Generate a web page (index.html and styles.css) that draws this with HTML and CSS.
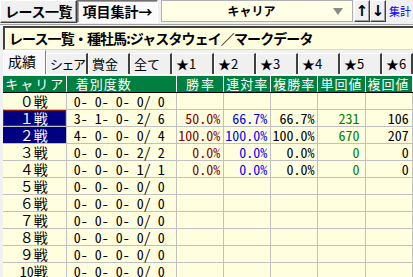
FILE: index.html
```html
<!DOCTYPE html>
<html>
<head>
<meta charset="utf-8">
<title>項目集計</title>
<link rel="stylesheet" href="styles.css">
</head>
<body>
<div class="toolbar">
  <button class="btn">レース一覧</button>
  <button class="btn pressed">項目集計→</button>
  <div class="select">
    <span class="select-text">キャリア</span>
    <span class="select-arrow"></span>
  </div>
  <button class="arrow">↑</button>
  <button class="arrow">↓</button>
  <a class="link" href="#">集計</a>
</div>

<div class="title">レース一覧・種牡馬:ジャスタウェイ／マークデータ</div>

<div class="tabs">
  <div class="tab active">成績</div>
  <div class="tab">シェア</div>
  <div class="tab">賞金</div>
  <div class="tab">全て</div>
  <div class="tab">★1</div>
  <div class="tab">★2</div>
  <div class="tab">★3</div>
  <div class="tab">★4</div>
  <div class="tab">★5</div>
  <div class="tab last">★6</div>
</div>

<div class="grid-wrap">
<table class="grid">
  <colgroup>
    <col class="c-name"><col class="c-count"><col class="c-rate"><col class="c-rate"><col class="c-rate"><col class="c-rate"><col class="c-rate"><col class="c-rest">
  </colgroup>
  <thead>
    <tr>
      <th class="h-center">キャリア</th>
      <th class="h-left">着別度数</th>
      <th class="h-center">勝率</th>
      <th>連対率</th>
      <th>複勝率</th>
      <th>単回値</th>
      <th>複回値</th>
      <th></th>
    </tr>
  </thead>
  <tbody>
    <tr><td class="name">０戦</td><td class="count"> 0- 0- 0- 0/ 0</td><td></td><td></td><td></td><td></td><td></td><td></td></tr>
    <tr><td class="name sel focus">１戦</td><td class="count"> 3- 1- 0- 2/ 6</td><td class="win">50.0%</td><td class="ren">66.7%</td><td class="fuku">66.7%</td><td class="tan">231</td><td class="fkv">106</td><td></td></tr>
    <tr><td class="name sel">２戦</td><td class="count"> 4- 0- 0- 0/ 4</td><td class="win">100.0%</td><td class="ren">100.0%</td><td class="fuku">100.0%</td><td class="tan">670</td><td class="fkv">207</td><td></td></tr>
    <tr><td class="name">３戦</td><td class="count"> 0- 0- 0- 2/ 2</td><td class="win">0.0%</td><td class="ren">0.0%</td><td class="fuku">0.0%</td><td class="tan">0</td><td class="fkv">0</td><td></td></tr>
    <tr><td class="name">４戦</td><td class="count"> 0- 0- 0- 1/ 1</td><td class="win">0.0%</td><td class="ren">0.0%</td><td class="fuku">0.0%</td><td class="tan">0</td><td class="fkv">0</td><td></td></tr>
    <tr><td class="name">５戦</td><td class="count"> 0- 0- 0- 0/ 0</td><td></td><td></td><td></td><td></td><td></td><td></td></tr>
    <tr><td class="name">６戦</td><td class="count"> 0- 0- 0- 0/ 0</td><td></td><td></td><td></td><td></td><td></td><td></td></tr>
    <tr><td class="name">７戦</td><td class="count"> 0- 0- 0- 0/ 0</td><td></td><td></td><td></td><td></td><td></td><td></td></tr>
    <tr><td class="name">８戦</td><td class="count"> 0- 0- 0- 0/ 0</td><td></td><td></td><td></td><td></td><td></td><td></td></tr>
    <tr><td class="name">９戦</td><td class="count"> 0- 0- 0- 0/ 0</td><td></td><td></td><td></td><td></td><td></td><td></td></tr>
    <tr><td class="name">10戦</td><td class="count"> 0- 0- 0- 0/ 0</td><td></td><td></td><td></td><td></td><td></td><td></td></tr>
  </tbody>
</table>
</div>
</body>
</html>
```

FILE: styles.css
```css
* {
  box-sizing: border-box;
}
html, body {
  margin: 0;
  overflow: hidden;
}
body {
  width: 413px;
  height: 277px;
  background-color: #f0f0f0;
  font-family: "Noto Sans Mono CJK JP", "Noto Sans CJK JP", monospace;
  font-size: 14px;
  color: #000;
}

/* top bar */
.toolbar {
  display: flex;
  align-items: flex-start;
  height: 25px;
  border-bottom: 1px solid #a0a0a0;
}
.btn {
  height: 23px;
  margin: 0;
  padding: 0;
  font-family: "Noto Sans CJK JP", sans-serif;
  font-weight: bold;
  font-size: 14px;
  line-height: 19px;
  white-space: nowrap;
  background-color: #f0f0f0;
  border: 1px solid;
  border-color: #fff #404040 #404040 #fff;
  box-shadow: inset -1px -1px 0 #a0a0a0;
}
.btn:first-child {
  width: 77px;
  letter-spacing: -0.5px;
}
.btn.pressed {
  width: 81px;
  background-color: #fafafa;
  border-color: #707070 #fff #fff #707070;
  box-shadow: inset 1px 1px 0 #a0a0a0;
}
.select {
  display: flex;
  align-items: center;
  width: 192px;
  height: 22px;
  margin: 0 1px 0 3px;
  padding: 0 9px 0 0;
  background-color: #ffffe6;
  border: 1px solid #b0b0b0;
}
.select-text {
  flex: 1;
  text-align: center;
  font-family: "Noto Sans CJK JP", sans-serif;
  font-weight: bold;
  font-size: 12px;
  line-height: 16px;
  padding-left: 8px;
}
.select-arrow {
  width: 0;
  height: 0;
  border-left: 5px solid transparent;
  border-right: 5px solid transparent;
  border-top: 7px solid #8a8a8a;
}
.arrow {
  width: 16px;
  height: 22px;
  margin: 0;
  padding: 0;
  font-family: "DejaVu Sans", sans-serif;
  font-weight: bold;
  font-size: 15px;
  line-height: 18px;
  background-color: #f0f0f0;
  border: 1px solid;
  border-color: #fff #404040 #404040 #fff;
  box-shadow: inset -1px -1px 0 #a0a0a0;
}
.link {
  margin: 3px 0 0 3px;
  color: #0000ff;
  text-decoration: none;
  font-family: "Noto Sans CJK JP", sans-serif;
  font-size: 11px;
  line-height: 16px;
  white-space: nowrap;
}

/* title */
.title {
  margin: 1px 0 0 3px;
  height: 24px;
  padding-left: 4px;
  background-color: #ffffe0;
  border-top: 2px solid #404040;
  border-left: 2px solid #404040;
  border-bottom: 1px solid #d8d8d8;
  font-family: "Noto Sans CJK JP", sans-serif;
  font-weight: bold;
  font-size: 14px;
  line-height: 21px;
  letter-spacing: -0.9px;
  white-space: nowrap;
}

/* tabs */
.tabs {
  display: flex;
  align-items: flex-end;
  height: 25px;
  margin-left: 3px;
  border-bottom: 1px solid #fff;
}
.tab {
  width: 42px;
  height: 21px;
  padding-left: 3px;
  font-family: "Noto Sans CJK JP", sans-serif;
  font-size: 13px;
  line-height: 19px;
  background-color: #f0f0f0;
  border-left: 1px solid #fff;
  border-top: 1px solid #fff;
  border-right: 2px solid #404040;
  white-space: nowrap;
  overflow: hidden;
}
.tab.narrow {
  letter-spacing: -1px;
}
.tab:nth-child(2) {
  letter-spacing: -1.5px;
}
.tab.active {
  width: 43px;
  height: 24px;
  line-height: 21px;
  padding-left: 4px;
  font-size: 14px;
  background-color: #f8f8f8;
  border-right: 1px solid #808080;
}
.tab.last {
  flex: 1;
}

/* grid */
.grid-wrap {
  margin: 1px 0 0 3px;
  overflow: hidden;
}
.grid {
  table-layout: fixed;
  border-collapse: collapse;
  width: 470px;
}
.c-name { width: 63px; }
.c-count { width: 110px; }
.c-rate { width: 47px; }
.c-rest { width: 60px; }

.grid th {
  height: 16px;
  padding: 0 0 0 2px;
  background-color: #008040;
  color: #fff;
  font-family: "Noto Sans CJK JP", sans-serif;
  font-weight: normal;
  font-size: 13px;
  line-height: 15px;
  letter-spacing: 1px;
  text-align: left;
  border-left: 1px solid #fff;
  border-bottom: 1px solid #000;
  white-space: nowrap;
}
.grid th:first-child {
  border-left: none;
}
.grid th.h-center {
  text-align: center;
  letter-spacing: 2px;
}
.grid th.h-left {
  padding-left: 9px;
}
.grid td {
  height: 17px;
  padding: 0 3px 0 0;
  background-color: #ffffe0;
  border: 1px solid #c0c0c0;
  line-height: 16px;
  text-align: right;
  white-space: pre;
}
.grid td:first-child {
  border-left: none;
}
.grid td.name {
  padding-right: 18px;
}
.grid td.sel {
  background-color: #000080;
  color: #fff;
}
.grid td.focus {
  box-shadow: inset 0 0 0 1px #8b1a1a;
}
.grid td.count {
  text-align: left;
  padding-left: 0;
}
.win { color: #800000; }
.ren { color: #0000ff; }
.tan { color: #008000; padding-right: 5px !important; }
```
